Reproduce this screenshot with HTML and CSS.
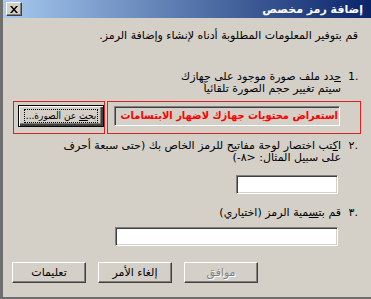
FILE: index.html
```html
<!DOCTYPE html>
<html lang="ar" dir="rtl">
<head>
  <meta charset="UTF-8">
  <title>إضافة رمز مخصص</title>
  <link rel="stylesheet" href="styles.css">
</head>
<body>

<div class="dialog">
  <div class="title-bar">
    <span class="title-text">إضافة رمز مخصص</span>
    <button class="close-btn">
      <svg width="8" height="7" viewBox="0 0 8 7">
        <path d="M0 0h2l2 2.5 2-2.5h2l-3 3.5 3 3.5h-2l-2-2.5-2 2.5h-2l3-3.5z" fill="#000"/>
      </svg>
    </button>
  </div>

  <div class="content">
    <p class="intro">قم بتوفير المعلومات المطلوبة أدناه لإنشاء وإضافة الرمز.</p>

    <div class="step step-one">
      <span class="num">1.</span>
      <div class="step-text">
        <div><u>ح</u>دد ملف صورة موجود على جهازك</div>
        <div>سيتم تغيير حجم الصورة تلقائياً</div>
      </div>
    </div>

    <div class="browse-row">
      <div class="red-box field-box">
        <div class="sunken browse-field">استعراض محتويات جهازك لاضهار الابتسامات</div>
      </div>
      <div class="red-box btn-box">
        <button class="win-btn default-btn"><span class="focus">بح<u>ث</u> عن الصورة...</span></button>
      </div>
    </div>

    <div class="step step-two">
      <span class="num">٢.</span>
      <div class="step-text">
        <div>ا<u>ك</u>تب اختصار لوحة مفاتيح للرمز الخاص بك (حتى سبعة أحرف</div>
        <div>على سبيل المثال: &lt;٨-)</div>
      </div>
    </div>
    <div class="input-row">
      <div class="sunken short-input"></div>
    </div>

    <div class="step step-three">
      <span class="num">٣.</span>
      <div class="step-text">
        <div>قم بت<u>س</u>مية الرمز (اختياري)</div>
      </div>
    </div>
    <div class="input-row">
      <div class="sunken long-input"></div>
    </div>

    <div class="buttons">
      <button class="win-btn disabled">موافق</button>
      <button class="win-btn">إلغاء الأمر</button>
      <button class="win-btn">تعليمات</button>
    </div>
  </div>
</div>

</body>
</html>
```

FILE: styles.css
```css
body {
  margin: 0;
  width: 371px;
  height: 299px;
  overflow: hidden;
  background-color: #d4d0c8;
  font-family: "DejaVu Sans", sans-serif;
  font-size: 11px;
  color: #000;
}

.dialog {
  height: 299px;
  box-sizing: border-box;
  border-left: 3px solid #6e6e6e;
  border-bottom: 2px solid #6e6e6e;
  display: flex;
  flex-direction: column;
}

.title-bar {
  height: 18px;
  background: linear-gradient(to left, #0a246a, #a6caf0);
  display: flex;
  align-items: center;
  justify-content: space-between;
  padding: 0 8px 0 3px;
}

.title-text {
  color: #fff;
  font-weight: bold;
  font-size: 11px;
}

.close-btn {
  width: 16px;
  height: 14px;
  padding: 0;
  background: #d4d0c8;
  border: 1px solid;
  border-color: #fff #404040 #404040 #fff;
  box-shadow: inset -1px -1px 0 #808080;
  display: flex;
  align-items: center;
  justify-content: center;
}

.content {
  padding: 0 13px 0 0;
}

.intro {
  margin: 11px 0 0 0;
  line-height: 14px;
}

.step {
  display: flex;
  line-height: 12px;
}

.num {
  width: 15px;
  flex-shrink: 0;
  direction: ltr;
  text-align: right;
  padding-left: 5px;
  box-sizing: border-box;
}

.step-text {
  padding-right: 2px;
}

.step-one { margin-top: 28px; }
.step-two { margin-top: 6px; }
.step-three { margin-top: 13px; }

.browse-row {
  display: flex;
  margin-top: 6px;
  margin-right: -3px;
  gap: 2px;
}

.red-box {
  box-sizing: border-box;
  border: 1px solid #e02020;
  height: 33px;
  display: flex;
}

.field-box {
  width: 254px;
  padding: 4px 20px 0 6px;
}

.btn-box {
  width: 92px;
  padding: 3px 0 0 1px;
}

.sunken {
  box-sizing: border-box;
  border: 1px solid;
  border-color: #808080 #fff #fff #808080;
  box-shadow: inset 1px 1px 0 #404040, inset -1px -1px 0 #d4d0c8;
}

.browse-field {
  width: 226px;
  height: 20px;
  overflow: hidden;
  color: #ff0000;
  font-family: "DejaVu Sans Condensed", "DejaVu Sans", sans-serif;
  font-weight: bold;
  font-size: 11px;
  line-height: 18px;
  white-space: nowrap;
  padding: 0 1px;
}

.input-row {
  display: flex;
  padding-right: 20px;
}

.short-input {
  width: 102px;
  height: 19px;
  margin-top: 11px;
  background: #fff;
}

.long-input {
  width: 223px;
  height: 19px;
  margin-top: 8px;
  background: #fff;
}

.win-btn {
  box-sizing: border-box;
  width: 74px;
  height: 21px;
  padding: 0;
  font-family: "DejaVu Sans", sans-serif;
  font-size: 11px;
  white-space: nowrap;
  background: #d4d0c8;
  color: #000;
  border: 1px solid;
  border-color: #fff #404040 #404040 #fff;
  box-shadow: inset -1px -1px 0 #808080;
}

.default-btn {
  width: 86px;
  height: 22px;
  font-family: "DejaVu Sans Condensed", "DejaVu Sans", sans-serif;
  font-size: 10px;
  border: 1px solid #000;
  box-shadow: inset 1px 1px 0 #fff, inset -2px -2px 0 #404040, inset -3px -3px 0 #808080;
}

.focus {
  display: inline-block;
  border: 1px dotted #000;
  padding: 0 1px;
  line-height: 12px;
}

.disabled {
  color: #808080;
  text-shadow: 1px 1px 0 #fff;
}

.buttons {
  display: flex;
  gap: 12px;
  margin-top: 16px;
  padding-right: 100px;
}
```
